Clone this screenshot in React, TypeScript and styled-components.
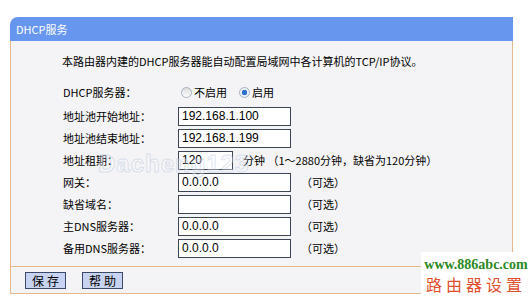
import { Fragment } from 'react';
import styled, { createGlobalStyle } from 'styled-components';

const GlobalStyle = createGlobalStyle`
  body {
    margin: 0;
    background: #ffffff;
    font-family: "Noto Sans CJK SC", "Liberation Sans", sans-serif;
    color: #000;
  }
`;

const Page = styled.div`
  position: relative;
  width: 531px;
  height: 300px;
  overflow: hidden;
  box-sizing: border-box;
  padding: 17px 18px 0 10px;
`;

const Panel = styled.div`
  width: 503px;
`;

const Header = styled.div`
  height: 24px;
  line-height: 24px;
  padding-left: 6px;
  background: #6796ee;
  border-top-left-radius: 8px;
  color: #fff;
  font-size: 11px;
`;

const Body = styled.div`
  background: #f4f4f6;
  border-left: 1px solid #e8b88c;
  border-right: 1px solid #e8b88c;
  padding: 13px 0 7px 51px;
`;

const Intro = styled.div`
  font-size: 11px;
  line-height: 14px;
  margin-bottom: 15px;
`;

const Form = styled.div`
  display: grid;
  grid-template-columns: 115px auto;
  grid-auto-rows: 22px;
  align-items: center;
  margin-left: 1px;
`;

const Label = styled.div<{ $gap?: boolean }>`
  font-size: 11px;
  line-height: 14px;
  margin-bottom: ${p => (p.$gap ? 4 : 0)}px;
`;

const Field = styled.div`
  display: flex;
  align-items: center;
  gap: 10px;
  font-size: 11px;
`;

const RadioRow = styled.div`
  display: flex;
  align-items: center;
  padding-left: 3px;
  margin-bottom: 4px;
  font-size: 11px;
`;

const RadioLabel = styled.label`
  display: flex;
  align-items: center;
  gap: 2px;
  margin-right: 12px;
`;

const Radio = styled.span<{ $on?: boolean }>`
  width: 9px;
  height: 9px;
  border-radius: 50%;
  border: 1px solid #a8b2c0;
  background: ${p =>
    p.$on
      ? 'radial-gradient(circle, #2f6fcf 0 2.5px, #e8eef6 3px)'
      : 'linear-gradient(#dcdcdc, #fdfdfd)'};
`;

const Input = styled.div<{ $w?: number }>`
  width: ${p => p.$w ?? 108}px;
  height: 17px;
  line-height: 17px;
  border: 1px solid #3c4654;
  background: #fff;
  padding-left: 3px;
  box-sizing: content-box;
  font-family: "Liberation Sans", Arial, sans-serif;
  font-size: 12px;
`;

const Note = styled.span`
  font-size: 11px;
  color: #000;
`;

const Footer = styled.div`
  height: 26px;
  display: flex;
  align-items: center;
  gap: 16px;
  padding-left: 14px;
  background: #f4f4f6;
  border: 1px solid #e8b88c;
`;

const Button = styled.button`
  width: 41px;
  height: 17px;
  padding: 0;
  background: #c7d3f0;
  border: 1px solid #3a4a6a;
  font-family: "Noto Sans CJK SC", sans-serif;
  font-size: 12px;
  line-height: 15px;
  letter-spacing: 3px;
  text-indent: 3px;
  color: #000;
`;

const Ghost = styled.div`
  position: absolute;
  left: 98px;
  top: 150px;
  font-family: "Liberation Sans", Arial, sans-serif;
  font-weight: bold;
  font-size: 24px;
  letter-spacing: 1px;
  color: rgba(255, 255, 255, 0.3);
  -webkit-text-stroke: 1px rgba(170, 185, 215, 0.4);
  pointer-events: none;
`;

const Stamp = styled.div`
  position: absolute;
  left: 421px;
  top: 252px;
  width: 110px;
  height: 48px;
  background: #ffffff;
  display: flex;
  flex-direction: column;
  align-items: center;
`;

const StampUrl = styled.div`
  font-family: "Liberation Serif", serif;
  font-weight: bold;
  font-size: 14px;
  line-height: 18px;
  color: #2b8a25;
  margin-top: 4px;
`;

const StampText = styled.div`
  font-family: "Noto Sans CJK SC", sans-serif;
  font-size: 16px;
  line-height: 20px;
  letter-spacing: 4px;
  color: #e0502c;
`;

const rows: { label: string; value: string; note?: string }[] = [
  { label: '网关：', value: '0.0.0.0', note: '（可选）' },
  { label: '缺省域名：', value: '', note: '（可选）' },
  { label: '主DNS服务器：', value: '0.0.0.0', note: '（可选）' },
  { label: '备用DNS服务器：', value: '0.0.0.0', note: '（可选）' },
];

export default function App() {
  return (
    <Page>
      <GlobalStyle />
      <Panel>
        <Header>DHCP服务</Header>
        <Body>
          <Intro>本路由器内建的DHCP服务器能自动配置局域网中各计算机的TCP/IP协议。</Intro>
          <Form>
            <Label $gap>DHCP服务器：</Label>
            <RadioRow>
              <RadioLabel>
                <Radio />
                不启用
              </RadioLabel>
              <RadioLabel>
                <Radio $on />
                启用
              </RadioLabel>
            </RadioRow>
            <Label>地址池开始地址：</Label>
            <Field>
              <Input>192.168.1.100</Input>
            </Field>
            <Label>地址池结束地址：</Label>
            <Field>
              <Input>192.168.1.199</Input>
            </Field>
            <Label>地址租期：</Label>
            <Field>
              <Input $w={50}>120</Input>
              <Note>分钟 （1～2880分钟，缺省为120分钟）</Note>
            </Field>
            {rows.map(r => (
              <Fragment key={r.label}>
                <Label>{r.label}</Label>
                <Field>
                  <Input>{r.value}</Input>
                  <Note>{r.note}</Note>
                </Field>
              </Fragment>
            ))}
          </Form>
        </Body>
        <Footer>
          <Button>保存</Button>
          <Button>帮助</Button>
        </Footer>
      </Panel>
      <Ghost>Dacheng123</Ghost>
      <Stamp>
        <StampUrl>www.886abc.com</StampUrl>
        <StampText>路由器设置</StampText>
      </Stamp>
    </Page>
  );
}
